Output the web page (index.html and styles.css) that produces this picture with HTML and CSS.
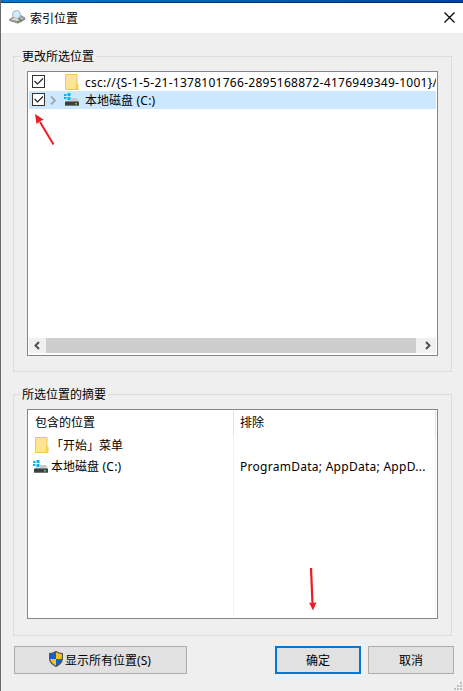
FILE: index.html
```html
<!DOCTYPE html>
<html lang="zh-CN">

<head>
    <meta charset="UTF-8" />
    <title>索引位置</title>
    <link rel="stylesheet" href="styles.css">
</head>

<body>
    <svg class="symbols" width="0" height="0">
        <symbol id="folder" viewBox="0 0 14 16">
            <path d="M.5.5h11.5v9.5h1v5.500H.5z" fill="#ffe494" stroke="#edc94f" />
            <path d="M11.500 10v5" stroke="#edc94f" />
        </symbol>
        <symbol id="drive" viewBox="0 0 16 14">
            <path d="M0 1h2.500v2H0zM3.500 0h3v3h-3zM0 4h2.500v2H0zM3.500 4h3v3h-3z" fill="#00b7f0" />
            <path d="M7 5h6l2 4H2V7.500h5z" fill="#c8c8c8" />
            <rect x="1" y="8.500" width="14" height="4.500" rx=".7" fill="#3b3f42" />
            <path d="M1.500 12.500h13" stroke="#777" />
            <rect x="11" y="10" width="2" height="1.500" fill="#35e04c" />
        </symbol>
    </svg>

    <div class="window">
        <header class="titlebar">
            <svg class="app-icon" width="17" height="14" viewBox="0 0 17 14">
                <path d="M.5 9.500 4 7l8-1.500 4 2.500v1.500L9.500 13H8L.5 10.500z" fill="#999" stroke="#808080" stroke-width=".7" />
                <path d="M2 9.500 5 8l6-.5 3 1-5 2.500z" fill="#ddd" />
                <path d="m9.500 8 3 3" stroke="#777" stroke-width="2" />
                <circle cx="7.500" cy="4.500" r="4" fill="#d3ecfb" stroke="#a3b4c2" />
                <rect x="8" y="11" width="2" height="1.500" fill="#4b9b35" />
            </svg>
            <h1>索引位置</h1>
            <svg class="close" width="11" height="11" viewBox="0 0 11 11">
                <path d="m.5.5 10 10M10.500.5l-10 10" stroke="#000" stroke-width="1.200" />
            </svg>
        </header>

        <fieldset class="group tree-group">
            <legend>更改所选位置</legend>
            <div class="box tree">
                <div class="row">
                    <svg class="check" width="13" height="13" viewBox="0 0 13 13">
                        <rect x=".5" y=".5" width="12" height="12" fill="#fff" stroke="#333" />
                        <path d="m2.500 6 3 3L11 3.500" fill="none" stroke="#222" stroke-width="1.200" />
                    </svg>
                    <span class="expander"></span>
                    <svg class="icon folder" width="14" height="16"><use href="#folder" /></svg>
                    <span class="latin">csc://{S-1-5-21-1378101766-2895168872-4176949349-1001}/</span>
                </div>
                <div class="row selected">
                    <svg class="check" width="13" height="13" viewBox="0 0 13 13">
                        <rect x=".5" y=".5" width="12" height="12" fill="#fff" stroke="#333" />
                        <path d="m2.500 6 3 3L11 3.500" fill="none" stroke="#222" stroke-width="1.200" />
                    </svg>
                    <span class="expander">
                        <svg width="6" height="9" viewBox="0 0 6 9">
                            <path d="m1 .5 4 4-4 4" fill="none" stroke="#a0a6ab" stroke-width="1.800" />
                        </svg>
                    </span>
                    <svg class="icon" width="16" height="14"><use href="#drive" /></svg>
                    <span>本地磁盘<span class="latin"> (C:)</span></span>
                </div>
                <div class="scrollbar">
                    <svg width="17" height="15" viewBox="0 0 17 15">
                        <path d="M10 4 6.500 7.500 10 11" fill="none" stroke="#505050" stroke-width="2" />
                    </svg>
                    <div class="thumb"></div>
                    <svg width="20" height="15" viewBox="0 0 20 15">
                        <path d="m10 4 3.500 3.500L10 11" fill="none" stroke="#505050" stroke-width="2" />
                    </svg>
                </div>
            </div>
        </fieldset>

        <fieldset class="group summary-group">
            <legend>所选位置的摘要</legend>
            <div class="box summary">
                <div class="column included">
                    <div class="head">包含的位置</div>
                    <div class="item">
                        <svg class="icon folder" width="14" height="16"><use href="#folder" /></svg>
                        <span>「开始」菜单</span>
                    </div>
                    <div class="item">
                        <svg class="icon" width="16" height="14"><use href="#drive" /></svg>
                        <span>本地磁盘<span class="latin"> (C:)</span></span>
                    </div>
                </div>
                <div class="column excluded">
                    <div class="head">排除</div>
                    <div class="item"></div>
                    <div class="item"><span class="latin">ProgramData; AppData; AppD...</span></div>
                </div>
            </div>
        </fieldset>

        <footer class="buttons">
            <button class="show-all">
                <svg width="14" height="16" viewBox="0 0 14 16">
                    <path d="M7 .5c2 1.500 4 2 6.500 2V7c0 4-2.500 6.500-6.500 8.500C3 13.500.5 11 .5 7V2.500C3 2.500 5 2 7 .5z" fill="#ffc02e" />
                    <path d="M7 .5V8H.5V2.500C3 2.500 5 2 7 .5zM7 8h6.400c-.4 3.500-2.700 5.700-6.400 7.500z" fill="#0a64c8" />
                    <path d="M7 .6c2 1.400 4 2 6.400 2V7c0 4-2.400 6.500-6.400 8.400C3 13.500.6 11 .6 7V2.600C3 2.600 5 2 7 .6z" fill="none" stroke="#4d5357" stroke-width="1.200" />
                </svg>
                <span>显示所有位置(S)</span>
            </button>
            <button class="ok">确定</button>
            <button class="cancel">取消</button>
        </footer>

        <svg class="grip" width="8" height="8" viewBox="0 0 8 8">
            <path d="M6 0h2v2H6zM3 3h2v2H3zM6 3h2v2H6zM0 6h2v2H0zM3 6h2v2H3zM6 6h2v2H6z" fill="#bfbfbf" />
        </svg>
        <svg class="arrow arrow-check" width="22" height="34" viewBox="0 0 22 34">
            <path d="M19.500 31.500 6 9" stroke="#ed1c24" stroke-width="2" />
            <path d="m1 1 8.500 5.500L6 8.500l-3.500 2.500z" fill="#ed1c24" />
        </svg>
        <svg class="arrow arrow-ok" width="10" height="44" viewBox="0 0 10 44">
            <path d="M3 1l1.500 36" stroke="#ed1c24" stroke-width="2.200" />
            <path d="m1 35.500 3.500.8 4-1L5 43.500z" fill="#ed1c24" />
        </svg>
    </div>
</body>

</html>
```

FILE: styles.css
```css
* {
    box-sizing: border-box;
}

body {
    margin: 0;
    font-family: "Noto Sans", "Noto Sans CJK SC", sans-serif;
    font-size: 12px;
    line-height: 17px;
    color: #000;
    background: #efefef;
}

svg {
    display: block;
    flex: none;
}

.symbols {
    position: absolute;
}

.window {
    position: relative;
    width: 463px;
    height: 691px;
    overflow: hidden;
    border-left: 1px solid #68686c;
    background: #efefef;
}

.window::before {
    content: "";
    display: block;
    height: 3px;
    margin-left: -1px;
    background: linear-gradient(rgba(0, 0, 0, 0) 66%, rgba(0, 20, 40, 0.5) 66%), linear-gradient(90deg, #0078ce, #0042a4);
}

.titlebar {
    display: flex;
    align-items: center;
    height: 30px;
    padding: 0 8px 2px;
    background: #fff;
}

.titlebar h1 {
    flex: 1;
    margin: 2px 0 0 4px;
    font-size: 12px;
    font-weight: normal;
}

.group {
    width: 439px;
    margin: 0 0 0 12px;
    padding: 0 13px;
    border: 1px solid #dcdcdc;
}

.group legend {
    height: 17px;
    margin-left: -7px;
    padding: 0 2px;
}

.tree-group {
    height: 324px;
    margin-top: 15px;
}

.summary-group {
    height: 250px;
    margin-top: 14px;
}

.box {
    width: 411px;
    margin-top: 6px;
    border: 1px solid #828790;
    background: #fff;
    white-space: nowrap;
    overflow: hidden;
}

.latin {
    letter-spacing: 0.27px;
    white-space: pre;
}

.tree {
    display: flex;
    flex-direction: column;
    height: 285px;
    padding: 1px;
}

.row {
    display: flex;
    align-items: center;
    height: 18px;
    padding-left: 3px;
    overflow: hidden;
}

.selected {
    background: #cce8ff;
}

.check {
    margin-bottom: 1px;
}

.expander {
    flex: none;
    width: 19px;
    padding-left: 5px;
}

.icon {
    width: 16px;
    margin-right: 5px;
}

.folder {
    width: 14px;
    margin: 0 6px 0 1px;
}

.scrollbar {
    display: flex;
    height: 15px;
    margin-top: auto;
    margin-bottom: 1px;
    background: #f0f0f0;
}

.thumb {
    flex: 1;
    background: #cdcdcd;
}

.summary {
    display: flex;
    height: 210px;
    padding: 1px;
}

.column {
    padding-left: 6px;
    border-right: 1px solid #edf3fa;
}

.included {
    width: 205px;
}

.excluded {
    width: 202px;
}

.head {
    height: 24px;
    line-height: 24px;
    border-right: 1px solid #e2e2e2;
    margin-right: -1px;
}

.item {
    display: flex;
    align-items: center;
    height: 21px;
}

.summary .icon {
    margin-left: -2px;
    margin-right: 2px;
}

.summary .folder {
    margin: 0 2px 1px 0;
}

.buttons {
    display: flex;
    margin: 10px 0 0 13px;
}

button {
    display: flex;
    align-items: center;
    justify-content: center;
    width: 86px;
    height: 28px;
    padding: 0;
    border: 1px solid #adadad;
    background: #e1e1e1;
    color: #000;
    font: inherit;
}

.show-all {
    width: 173px;
    margin-right: 88px;
    padding-right: 1px;
    gap: 2px;
}

.show-all svg {
    margin-bottom: 2px;
}

.ok {
    margin-right: 7px;
    border: 2px solid #0078d7;
}

.grip {
    position: absolute;
    right: 1px;
    bottom: 1px;
}

.arrow {
    position: absolute;
}

.arrow-check {
    left: 33px;
    top: 113px;
}

.arrow-ok {
    left: 307px;
    top: 567px;
}
```
